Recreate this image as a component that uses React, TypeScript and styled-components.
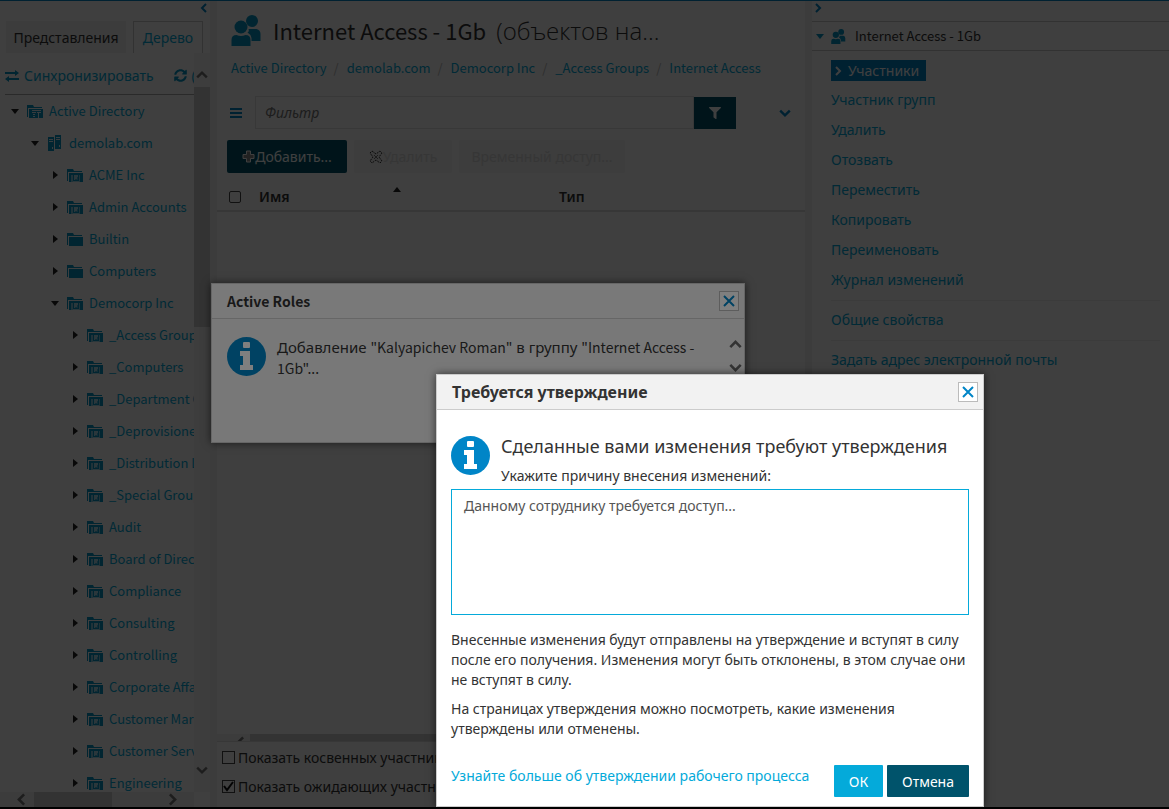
import React from "react";
import styled, { createGlobalStyle, css } from "styled-components";
import { FaFilter, FaSyncAlt } from "react-icons/fa";

const cyrillic = `"Noto Sans", "Open Sans", sans-serif`;
const latin = `"Noto Sans CJK SC", "Noto Sans", sans-serif`;

const c = {
  link: "#04aada",
  icon: "#0596c4",
  blue: "#0085c7",
  dark: "#00536b",
  text: "#333",
  line: "#c8c8c8",
};

const GlobalStyle = createGlobalStyle`
  * { box-sizing: border-box; }
  html, body { margin: 0; height: 100%; overflow: hidden; background: #000; }
  #root { height: 100%; }
  body, button, input, textarea { font-family: ${cyrillic}; font-size: 14px; color: ${c.text}; }
  button { border: 0; padding: 0; background: none; cursor: pointer; }
  a { color: ${c.link}; text-decoration: none; }
  svg { display: block; flex: none; }
`;

const Screen = styled.div`
  position: relative;
  height: 100vh;
  display: flex;
  flex-direction: column;
  overflow: hidden;
`;

const Workspace = styled.div`
  flex: 1;
  min-height: 0;
  display: flex;
  background: #fafafa;
  border-top: 1px solid ${c.blue};
`;

const BottomEdge = styled.div`
  height: 2px;
  background: #000;
`;

const Latin = styled.span`
  font-family: ${latin};
`;

/* ---------- icons ---------- */

type Dir = "left" | "right" | "up" | "down";
const chevronPoints: Record<Dir, string> = {
  left: "7,1 3,5 7,9",
  right: "3,1 7,5 3,9",
  up: "1,7 5,3 9,7",
  down: "1,3 5,7 9,3",
};

const Chevron = ({ dir, size = 10, color = c.blue, weight = 2 }: { dir: Dir; size?: number; color?: string; weight?: number }) => (
  <svg width={size} height={size} viewBox="0 0 10 10" aria-hidden="true">
    <polyline points={chevronPoints[dir]} fill="none" stroke={color} strokeWidth={weight} />
  </svg>
);

const Caret = ({ dir, color = "#222" }: { dir: "right" | "down" | "up"; color?: string }) => (
  <svg width="10" height="10" viewBox="0 0 10 10" fill={color} aria-hidden="true">
    <path d={dir === "right" ? "M3 1l5 4-5 4z" : dir === "down" ? "M1 3h8L5 8z" : "M1 7h8L5 2z"} />
  </svg>
);

const FolderIcon = ({ kind }: { kind: "root" | "ou" | "plain" }) => (
  <svg width="16" height="15" viewBox="0 0 16 15" aria-hidden="true">
    <path d="M0 13V1h6l1 2h8v1H1v9z" fill={c.icon} />
    <path d="M2 5h14v9H2z" fill={c.icon} />
    {kind === "ou" && (
      <>
        <path d="M4 7h2v7H4zM12 7h1v7h-1z" fill="#d8edf6" opacity="0.6" />
        <path d="M7 7h4v5H7zM6 13h6v1H6z" fill="#d8edf6" opacity="0.8" />
        <path d="M10 9h1v3H8v-1h2z" fill={c.icon} opacity="0.6" />
      </>
    )}
    {kind === "root" && <path d="M5 6h9v1H5zM5 8h4v1H5zM6 10h2v1H6zM6 12h2v1H6zM10 8h4v1h-2v5h-1V9h-1z" fill="#e4f3f9" />}
  </svg>
);

const ServerIcon = () => (
  <svg width="16" height="16" viewBox="0 0 16 16" aria-hidden="true">
    <path d="M1 2h6v14H1zM8 0h6v14H8z" fill={c.icon} />
    <path d="M2 4h4v1H2zM2 6h4v1H2zM9 2h4v1H9zM9 4h4v1H9zM5 12h1v2H5zM12 10h1v2h-1z" fill="#e4f3f9" />
  </svg>
);

const PeopleIcon = ({ size }: { size: number }) => (
  <svg width={size} height={size} viewBox="0 0 30 31" fill={c.icon} aria-hidden="true">
    <circle cx="20.500" cy="6" r="6" />
    <path d="M17 14h8q4 1 4 5v7H20v-3q-1-4-4-5.500q2-1 1-3.500z" />
    <circle cx="9.500" cy="12" r="6.500" />
    <path d="M0 31v-6q0-5 5-5q4.500 2 9 0q5 0 5 5v6z" />
  </svg>
);

const InfoIcon = () => (
  <svg width="39" height="39" viewBox="0 0 39 39" role="img" aria-label="i">
    <circle cx="19.500" cy="19.500" r="19.500" fill={c.blue} />
    <rect x="16" y="5" width="7" height="6" rx="1" fill="#fff" />
    <path d="M13 14h10v14h3v5H13v-5h3v-9h-3z" fill="#fff" />
  </svg>
);

const SwapIcon = () => (
  <svg width="14" height="12" viewBox="0 0 14 12" fill={c.icon} aria-hidden="true">
    <path d="M0 2h10V0l4 3-4 3V4H0zM14 8H4V6L0 9l4 3v-2h10z" />
  </svg>
);

const PlusIcon = () => (
  <svg width="13" height="13" viewBox="0 0 13 13" aria-hidden="true">
    <path d="M4.500 1h4v3.500H12v4H8.500V12h-4V8.500H1v-4h3.500z" fill="#888" stroke="#fff" strokeWidth="1" />
  </svg>
);

const CrossOutline = () => (
  <svg width="14" height="14" viewBox="0 0 14 14" aria-hidden="true">
    <path d="M3 1l4 3 4-3 2 2-3 4 3 4-2 2-4-3-4 3-2-2 3-4-3-4z" fill="#eee" stroke="#333" strokeWidth="1" strokeDasharray="2 1" />
    <path d="M5 5l4 4M9 5L5 9" stroke="#777" strokeWidth="1" />
  </svg>
);

const CloseIcon = () => (
  <svg width="12" height="12" viewBox="0 0 12 12" aria-hidden="true">
    <path d="M1 1l10 10M11 1L1 11" stroke={c.blue} strokeWidth="2" />
  </svg>
);

const BarsIcon = () => (
  <svg width="12" height="10" viewBox="0 0 12 10" fill={c.blue} aria-hidden="true">
    <path d="M0 0h12v2H0zM0 4h12v2H0zM0 8h12v2H0z" />
  </svg>
);

/* ---------- left navigation ---------- */

const Nav = styled.nav`
  width: 210px;
  flex: none;
  display: flex;
  flex-direction: column;
  background: #fdfdfd;
`;

const NavTop = styled.div`
  height: 20px;
  display: flex;
  justify-content: flex-end;
  align-items: flex-start;
  padding: 2px 1px 0 0;
`;

const Tabs = styled.div`
  display: flex;
  justify-content: space-between;
  height: 32px;
  padding: 0 7px 0 6px;
`;

const Tab = styled.button<{ $active?: boolean }>`
  height: 32px;
  width: ${(p) => (p.$active ? 70 : 120)}px;
  ${(p) =>
    p.$active
      ? css`
          color: ${c.link};
          border: 1px solid ${c.line};
          border-bottom: 0;
        `
      : css`
          background: #f1f1f1;
        `}
`;

const NavBody = styled.div`
  flex: 1;
  min-height: 0;
  display: flex;
`;

const NavContent = styled.div`
  flex: 1;
  min-width: 0;
  overflow: hidden;
  padding-left: 5px;
`;

const SyncRow = styled.div`
  height: 42px;
  display: flex;
  align-items: center;
  gap: 5px;
  padding-top: 4px;
  white-space: nowrap;
  color: ${c.link};
  border-bottom: 1px solid #aaa;
  svg + a { margin-right: 15px; }
`;

const Tree = styled.ul`
  list-style: none;
  margin: 0;
  padding: 0;
`;

const TreeRow = styled.li<{ $level: number }>`
  height: 32px;
  display: flex;
  align-items: center;
  gap: 6px;
  white-space: nowrap;
  padding-left: ${(p) => p.$level * 20 + 5}px;
  a { font: 13px/20px ${latin}; }
  svg:first-child { margin-right: 1px; }
`;

const VScroll = styled.div`
  width: 16px;
  display: flex;
  flex-direction: column;
  align-items: center;
  background: #f4f4f4;
  padding: 16px 0;
`;

const VThumb = styled.div`
  width: 16px;
  height: 240px;
  margin: 6px 0 auto;
  background: #cdcdcd;
`;

const HScroll = styled.div`
  height: 15px;
  width: 194px;
  flex: none;
  display: flex;
  align-items: center;
  background: #f0f0f0;
  padding: 0 15px;
`;

const HThumb = styled.div`
  width: 78px;
  height: 15px;
  margin: 0 auto 0 6px;
  background: #cdcdcd;
`;

const Splitter = styled.div`
  width: 7px;
  flex: none;
  background: #f2f2f2;
`;

/* ---------- main area ---------- */

const Main = styled.main`
  flex: 1;
  min-width: 0;
  display: flex;
  flex-direction: column;
  background: #fdfdfd;
`;

const TitleBar = styled.header`
  display: flex;
  align-items: center;
  gap: 11px;
  height: 59px;
  padding-left: 14px;
`;

const Title = styled.h1`
  margin: 0;
  font-size: 22px;
  line-height: 32px;
  font-weight: 400;
  white-space: nowrap;
`;

const LightText = styled.span`
  font-family: "Open Sans", "Noto Sans", sans-serif;
  font-size: 24px;
  font-weight: 300;
  margin-left: 10px;
`;

const Crumbs = styled.nav`
  display: flex;
  gap: 7px;
  height: 20px;
  align-items: center;
  margin: -2px 0 18px;
  padding-left: 14px;
  font: 13px/20px ${latin};
  span { color: #bbb; margin-right: 1px; }
`;

const FilterRow = styled.div`
  display: flex;
  align-items: center;
  height: 33px;
  padding: 0 14px 0 13px;
`;

const FilterInput = styled.input`
  flex: 1;
  height: 33px;
  margin-left: 13px;
  padding: 0 9px;
  border: 1px solid #e0e0e0;
  background: #fdfdfd;
  font-style: italic;
  &::placeholder { color: #777; }
`;

const FilterButton = styled.button`
  width: 42px;
  height: 32px;
  display: grid;
  place-items: center;
  background: ${c.dark};
  color: #fff;
  margin-right: 43px;
`;

const Toolbar = styled.div`
  display: flex;
  gap: 7px;
  padding: 11px 10px;
`;

const ToolButton = styled.button<{ $width: number; $primary?: boolean }>`
  width: ${(p) => p.$width}px;
  height: 33px;
  display: flex;
  align-items: center;
  justify-content: center;
  white-space: nowrap;
  border-radius: 2px;
  background: ${(p) => (p.$primary ? c.dark : "#f4f4f4")};
  color: ${(p) => (p.$primary ? "#fff" : "#dadada")};
`;

const MembersTable = styled.table`
  width: 100%;
  border-collapse: collapse;
  table-layout: fixed;
  th {
    height: 27px;
    padding: 0 0 1px;
    text-align: left;
    font-weight: 600;
    border-bottom: 2px solid #dcdcdc;
  }
  th:first-child { width: 42px; padding-left: 12px; }
  th:nth-child(2) { width: 300px; }
`;

const NameHeader = styled.span`
  display: flex;
  justify-content: space-between;
  height: 24px;
  line-height: 24px;
  padding-right: 157px;
`;

const Check = styled.input`
  appearance: none;
  display: block;
  width: 12px;
  height: 12px;
  margin: 0;
  border: 1px solid #444;
  border-radius: 2px;
`;

const EmptyArea = styled.div`
  flex: 1;
`;

const ListScroll = styled.div`
  height: 8px;
  overflow: hidden;
  display: flex;
  gap: 3px;
  padding-left: 17px;
  background: #f2f2f2;
  border-bottom: 1px solid #ddd;
  svg { margin-top: 2px; }
  div { flex: 1; background: #cdcdcd; margin-right: 16px; }
`;

const Options = styled.div`
  height: 65px;
  padding: 1px 5px;
`;

const Option = styled.label`
  display: flex;
  align-items: center;
  gap: 3px;
  height: 29px;
  line-height: 20px;
  white-space: nowrap;
`;

const OptionBox = styled.input`
  appearance: none;
  width: 13px;
  height: 13px;
  margin: 0;
  border: 1px solid #444;
`;

const TickBox = styled.span`
  position: relative;
  display: flex;
  svg { position: absolute; left: 1px; top: 1px; pointer-events: none; }
`;

/* ---------- right commands ---------- */

const Side = styled.aside`
  width: 357px;
  flex: none;
  background: #fcfcfc;
`;

const SideTop = styled.div`
  height: 21px;
  display: flex;
  align-items: flex-start;
  padding: 2px 1px;
  border-bottom: 1px solid ${c.line};
`;

const SideHeader = styled.div`
  height: 29px;
  display: flex;
  align-items: center;
  gap: 6px;
  padding-left: 3px;
  border-bottom: 1px solid ${c.line};
  font: 13px/20px ${latin};
  span { margin-left: 3px; }
`;

const Commands = styled.ul`
  list-style: none;
  margin: 0;
  padding: 9px 9px 0 19px;
`;

const Command = styled.li<{ $ruled?: boolean }>`
  height: ${(p) => (p.$ruled ? 40 : 30)}px;
  padding-top: ${(p) => (p.$ruled ? 9 : 0)}px;
  border-top: ${(p) => (p.$ruled ? "1px solid #ececec" : "0")};
  line-height: 20px;
`;

const ActiveCommand = styled.a`
  display: inline-flex;
  align-items: center;
  gap: 5px;
  height: 21px;
  padding: 0 7px 0 2px;
  background: ${c.blue};
  color: #fff;
`;

/* ---------- dialogs ---------- */

const Shade = styled.div`
  position: absolute;
  inset: 0 0 2px;
  background: rgba(0, 0, 0, 0.5);
`;

const Dialog = styled.section<{ $x: number; $y: number; $w: number }>`
  position: absolute;
  left: ${(p) => p.$x}px;
  top: ${(p) => p.$y}px;
  width: ${(p) => p.$w}px;
  background: #fff;
  border: 1px solid #ccc;
  box-shadow: 0 0 8px rgba(0, 0, 0, 0.6);
`;

const DialogHeader = styled.header`
  height: 35px;
  display: flex;
  align-items: center;
  justify-content: space-between;
  padding: 0 5px 0 15px;
  background: #f2f2f2;
  border-bottom: 1px solid #ccc;
  h2 { margin: 0; font-size: 16px; line-height: 20px; font-weight: 700; }
  ${Latin} { font-size: 14px; }
`;

const CloseButton = styled.button`
  width: 20px;
  height: 20px;
  display: grid;
  place-items: center;
  background: #fff;
  border: 1px solid #bbb;
`;

const Progress = styled.div`
  display: flex;
  height: 123px;
  padding: 18px 2px 0 15px;
  gap: 11px;
  background: #f1f1f1;
  p { margin: 0; flex: 1; font-size: 15px; line-height: 21px; }
  ${Latin} { font-size: 14px; }
`;

const ProgressScroll = styled.div`
  display: flex;
  flex-direction: column;
  gap: 10px;
  padding-top: 1px;
`;

const Form = styled.form`
  padding: 24px 14px 9px;
  p { margin: 0 0 9px; font-size: 14px; line-height: 20px; }
`;

const Intro = styled.div`
  display: flex;
  gap: 11px;
  padding-top: 2px;
  height: 55px;
  h3 { margin: 0; font-size: 18px; line-height: 20px; font-weight: 400; white-space: nowrap; }
  label { display: block; margin-top: 10px; line-height: 20px; white-space: nowrap; }
`;

const Reason = styled.textarea`
  display: block;
  width: 100%;
  height: 126px;
  margin-bottom: 15px;
  padding: 6px 12px;
  resize: none;
  outline: 0;
  line-height: 20px;
  color: #555;
  border: 1px solid ${c.link};
  border-radius: 0;
`;

const Footer = styled.footer`
  display: flex;
  gap: 4px;
  margin-top: 26px;
  a { flex: 1; line-height: 22px; white-space: nowrap; }
`;

const ActionButton = styled.button<{ $width: number; $dark?: boolean }>`
  width: ${(p) => p.$width}px;
  height: 32px;
  border-radius: 1px;
  color: #fff;
  background: ${(p) => (p.$dark ? c.dark : c.link)};
`;

/* ---------- data ---------- */

const tree: { label: string; level: number; open?: boolean; icon?: "root" | "server" | "plain" }[] = [
  { label: "Active Directory", level: 0, open: true, icon: "root" },
  { label: "demolab.com", level: 1, open: true, icon: "server" },
  { label: "ACME Inc", level: 2 },
  { label: "Admin Accounts", level: 2 },
  { label: "Builtin", level: 2, icon: "plain" },
  { label: "Computers", level: 2, icon: "plain" },
  { label: "Democorp Inc", level: 2, open: true },
  ...[
    "_Access Groups",
    "_Computers",
    "_Department Groups",
    "_Deprovisioned",
    "_Distribution Lists",
    "_Special Groups",
    "Audit",
    "Board of Directors",
    "Compliance",
    "Consulting",
    "Controlling",
    "Corporate Affairs",
    "Customer Marketing",
    "Customer Service",
    "Engineering",
  ].map((label) => ({ label, level: 3 })),
];

const crumbs = ["Active Directory", "demolab.com", "Democorp Inc", "_Access Groups", "Internet Access"];

const commands = ["Участник групп", "Удалить", "Отозвать", "Переместить", "Копировать", "Переименовать", "Журнал изменений"];
const ruledCommands = ["Общие свойства", "Задать адрес электронной почты"];

export default function App() {
  return (
    <Screen>
      <GlobalStyle />
      <Workspace>
        <Nav>
          <NavTop>
            <Chevron dir="left" />
          </NavTop>
          <Tabs>
            <Tab>Представления</Tab>
            <Tab $active>Дерево</Tab>
          </Tabs>
          <NavBody>
            <NavContent>
              <SyncRow>
                <SwapIcon />
                <a href="#sync">Синхронизировать</a>
                <FaSyncAlt size={13} color={c.icon} />
                <span>(</span>
              </SyncRow>
              <Tree>
                {tree.map((n) => (
                  <TreeRow key={n.label} $level={n.level}>
                    <Caret dir={n.open ? "down" : "right"} />
                    {n.icon === "server" ? <ServerIcon /> : <FolderIcon kind={n.icon ?? "ou"} />}
                    <a href="#node">{n.label}</a>
                  </TreeRow>
                ))}
              </Tree>
            </NavContent>
            <VScroll>
              <Chevron dir="up" size={12} color="#777" />
              <VThumb />
              <Chevron dir="down" size={12} color="#777" />
            </VScroll>
          </NavBody>
          <HScroll>
            <Chevron dir="left" size={13} color="#777" />
            <HThumb />
            <Chevron dir="right" size={13} color="#777" />
          </HScroll>
        </Nav>
        <Splitter />
        <Main>
          <TitleBar>
            <PeopleIcon size={31} />
            <Title>
              <Latin>Internet Access - 1Gb</Latin>
              <LightText>(объектов на...</LightText>
            </Title>
          </TitleBar>
          <Crumbs>
            {crumbs.map((t, i) => (
              <React.Fragment key={t}>
                {i > 0 && <span>/</span>}
                <a href="#crumb">{t}</a>
              </React.Fragment>
            ))}
          </Crumbs>
          <FilterRow>
            <BarsIcon />
            <FilterInput placeholder="Фильтр" aria-label="Фильтр" />
            <FilterButton aria-label="Фильтр">
              <FaFilter size={12} />
            </FilterButton>
            <Chevron dir="down" size={12} />
          </FilterRow>
          <Toolbar>
            <ToolButton $width={120} $primary>
              <PlusIcon />
              Добавить...
            </ToolButton>
            <ToolButton $width={98}>
              <CrossOutline />
              Удалить
            </ToolButton>
            <ToolButton $width={166}>Временный доступ...</ToolButton>
          </Toolbar>
          <MembersTable>
            <thead>
              <tr>
                <th>
                  <Check type="checkbox" aria-label="Имя" />
                </th>
                <th>
                  <NameHeader>
                    Имя
                    <Caret dir="up" />
                  </NameHeader>
                </th>
                <th>Тип</th>
              </tr>
            </thead>
          </MembersTable>
          <EmptyArea />
          <ListScroll>
            <Chevron dir="left" size={13} color="#777" />
            <div />
          </ListScroll>
          <Options>
            <Option>
              <OptionBox type="checkbox" />
              Показать косвенных участников
            </Option>
            <Option>
              <TickBox>
                <OptionBox type="checkbox" defaultChecked />
                <svg width="11" height="11" viewBox="0 0 11 11" aria-hidden="true">
                  <path d="M1 5l3 4 6-8" fill="none" stroke="#111" strokeWidth="2" />
                </svg>
              </TickBox>
              Показать ожидающих участников
            </Option>
          </Options>
        </Main>
        <Splitter />
        <Side>
          <SideTop>
            <Chevron dir="right" />
          </SideTop>
          <SideHeader>
            <Caret dir="down" color={c.icon} />
            <PeopleIcon size={15} />
            <span>Internet Access - 1Gb</span>
          </SideHeader>
          <Commands>
            <Command>
              <ActiveCommand href="#members">
                <Chevron dir="right" color="#fff" />
                Участники
              </ActiveCommand>
            </Command>
            {commands.map((t) => (
              <Command key={t}>
                <a href="#command">{t}</a>
              </Command>
            ))}
            {ruledCommands.map((t) => (
              <Command key={t} $ruled>
                <a href="#command">{t}</a>
              </Command>
            ))}
          </Commands>
        </Side>
      </Workspace>
      <BottomEdge />
      <Shade />
      <Dialog $x={211} $y={283} $w={534} role="dialog" aria-label="Active Roles">
        <DialogHeader>
          <h2>
            <Latin>Active Roles</Latin>
          </h2>
          <CloseButton aria-label="Закрыть">
            <CloseIcon />
          </CloseButton>
        </DialogHeader>
        <Progress>
          <InfoIcon />
          <p>
            Добавление <Latin>"Kalyapichev Roman"</Latin> в группу <Latin>"Internet Access - 1Gb"...</Latin>
          </p>
          <ProgressScroll>
            <Chevron dir="up" size={13} color="#666" />
            <Chevron dir="down" size={13} color="#666" />
          </ProgressScroll>
        </Progress>
      </Dialog>
      <Shade />
      <Dialog $x={436} $y={374} $w={548} role="dialog" aria-label="Требуется утверждение">
        <DialogHeader>
          <h2>Требуется утверждение</h2>
          <CloseButton aria-label="Закрыть">
            <CloseIcon />
          </CloseButton>
        </DialogHeader>
        <Form>
          <Intro>
            <InfoIcon />
            <div>
              <h3>Сделанные вами изменения требуют утверждения</h3>
              <label htmlFor="reason">Укажите причину внесения изменений:</label>
            </div>
          </Intro>
          <Reason id="reason" defaultValue="Данному сотруднику требуется доступ..." />
          <p>
            Внесенные изменения будут отправлены на утверждение и вступят в силу после его получения. Изменения могут быть
            отклонены, в этом случае они не вступят в силу.
          </p>
          <p>На страницах утверждения можно посмотреть, какие изменения утверждены или отменены.</p>
          <Footer>
            <a href="#more">Узнайте больше об утверждении рабочего процесса</a>
            <ActionButton type="button" $width={49}>
              ОК
            </ActionButton>
            <ActionButton type="button" $width={82} $dark>
              Отмена
            </ActionButton>
          </Footer>
        </Form>
      </Dialog>
    </Screen>
  );
}
